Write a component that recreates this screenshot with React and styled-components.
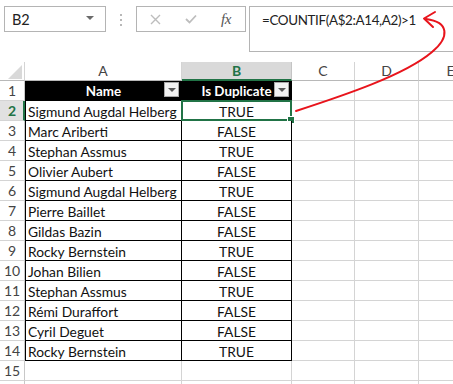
import React from "react";
import styled, { createGlobalStyle } from "styled-components";

const Global = createGlobalStyle`
  html, body { margin: 0; padding: 0; background: #fff; }
  body { font-family: Lato, "Open Sans", "Liberation Sans", sans-serif; font-size: 14px; color: #111; }
  * { box-sizing: border-box; }
`;

const Page = styled.div`
  position: relative;
  width: 453px;
  height: 384px;
  overflow: hidden;
  background: #fff;
`;

const FormulaBar = styled.div`
  display: flex;
  align-items: flex-start;
  height: 62px;
  padding: 6px 0 0 4px;
`;

const NameBox = styled.div`
  width: 102px;
  height: 26px;
  border: 1px solid #b4b4b4;
  display: flex;
  align-items: center;
  justify-content: space-between;
  padding: 0 11px 0 7px;
  font-size: 14.5px;
  color: #222;
`;

const Caret = styled.span`
  width: 0;
  height: 0;
  border-left: 4px solid transparent;
  border-right: 4px solid transparent;
  border-top: 4px solid #6a6a6a;
  margin-top: -2px;
`;

const Dots = styled.div`
  width: 30px;
  height: 26px;
  display: flex;
  flex-direction: column;
  align-items: center;
  justify-content: center;
  gap: 3px;
  padding-top: 1px;
`;

const Dot = styled.span`
  width: 2px;
  height: 2px;
  background: #b8b8b8;
`;

const ButtonBox = styled.div`
  width: 110px;
  height: 26px;
  border: 1px solid #b4b4b4;
  display: flex;
  align-items: center;
  padding-left: 13px;
`;

const IconSlot = styled.span`
  width: 35px;
  display: flex;
  align-items: center;
`;

const Fx = styled.span`
  font-family: "Liberation Serif", "DejaVu Serif", serif;
  font-style: italic;
  font-size: 15px;
  color: #555;
  letter-spacing: -0.5px;
  margin-left: 1px;
`;

const FormulaBox = styled.div`
  flex: 1;
  margin-left: 3px;
  height: 46px;
  border: 1px solid #b4b4b4;
  border-right: none;
  padding: 3px 0 0 12px;
  line-height: 20px;
  font-size: 13.4px;
  letter-spacing: -0.35px;
  color: #222;
`;

const Sheet = styled.div`
  display: grid;
  grid-template-columns: 25px 157px 110px 63px 64px 64px;
  grid-template-rows: 19px;
  grid-auto-rows: 20px;
  width: 483px;
`;

const Corner = styled.div`
  position: relative;
  border-right: 1px solid #d4d4d4;
  border-bottom: 1px solid #b8b8b8;
  &::after {
    content: "";
    position: absolute;
    left: 8px;
    top: 3px;
    width: 14px;
    height: 14px;
    background: #d9d9d9;
    clip-path: polygon(100% 0, 100% 100%, 0 100%);
  }
`;

const ColHeader = styled.div`
  background: ${(p) => (p.$active ? "#d9d9d9" : "#fff")};
  border-right: 1px solid ${(p) => (p.$active ? "#c4c4c4" : "#d4d4d4")};
  border-bottom: ${(p) => (p.$active ? "2px solid #217346" : "1px solid #b8b8b8")};
  color: ${(p) => (p.$active ? "#217346" : "#444")};
  font-weight: ${(p) => (p.$active ? 700 : 400)};
  text-align: center;
  font-size: 14px;
  line-height: 17px;
`;

const RowHeader = styled.div`
  background: ${(p) => (p.$active ? "#e1e1e1" : "#fff")};
  border-right: ${(p) => (p.$active ? "2px solid #217346" : "1px solid #c8c8c8")};
  border-bottom: 1px solid #d4d4d4;
  color: ${(p) => (p.$active ? "#217346" : "#444")};
  font-weight: ${(p) => (p.$active ? 700 : 400)};
  text-align: center;
  font-size: 14px;
  line-height: 20px;
  padding-left: ${(p) => (p.$active ? "1px" : "0")};
`;

const Cell = styled.div`
  border-right: 1px solid #d4d4d4;
  border-bottom: 1px solid #d4d4d4;
`;

const TableCell = styled.div`
  position: relative;
  border-right: 1px solid #000;
  border-bottom: 1px solid #000;
  border-left: ${(p) => (p.$first ? "1px solid #000" : "none")};
  background: ${(p) => (p.$head ? "#000" : "#fff")};
  color: ${(p) => (p.$head ? "#fff" : "#111")};
  font-weight: ${(p) => (p.$head ? 700 : 400)};
  text-align: ${(p) => (p.$align === "left" ? "left" : "center")};
  padding: 1px 2px 0 2px;
  line-height: 19px;
  font-size: ${(p) => (p.$head ? "13.4px" : "13.8px")};
  white-space: nowrap;
`;

const FilterButton = styled.span`
  position: absolute;
  right: 2px;
  top: 1px;
  width: 15px;
  height: 15px;
  background: #f2f2f2;
  border: 1px solid #a8a8a8;
  display: flex;
  align-items: center;
  justify-content: center;
  &::after {
    content: "";
    width: 0;
    height: 0;
    border-left: 4px solid transparent;
    border-right: 4px solid transparent;
    border-top: 4px solid #5a5a5a;
  }
`;

const Selection = styled.span`
  position: absolute;
  left: -1px;
  top: -1px;
  right: -1px;
  bottom: -1px;
  border: 2px solid #217346;
  pointer-events: none;
`;

const FillHandle = styled.span`
  position: absolute;
  right: -4px;
  bottom: -4px;
  width: 6px;
  height: 6px;
  background: #217346;
  outline: 1px solid #fff;
`;

const Overlay = styled.svg`
  position: absolute;
  left: 0;
  top: 0;
  pointer-events: none;
`;

const rows = [
  ["Sigmund Augdal Helberg", "TRUE"],
  ["Marc Ariberti", "FALSE"],
  ["Stephan Assmus", "TRUE"],
  ["Olivier Aubert", "FALSE"],
  ["Sigmund Augdal Helberg", "TRUE"],
  ["Pierre Baillet", "FALSE"],
  ["Gildas Bazin", "FALSE"],
  ["Rocky Bernstein", "TRUE"],
  ["Johan Bilien", "FALSE"],
  ["Stephan Assmus", "TRUE"],
  ["Rémi Duraffort", "FALSE"],
  ["Cyril Deguet", "FALSE"],
  ["Rocky Bernstein", "TRUE"],
];

const cols = ["A", "B", "C", "D", "E"];

export default function App() {
  return (
    <Page>
      <Global />
      <FormulaBar>
        <NameBox>
          <span>B2</span>
          <Caret />
        </NameBox>
        <Dots>
          <Dot />
          <Dot />
          <Dot />
        </Dots>
        <ButtonBox>
          <IconSlot>
            <svg width="11" height="11" viewBox="0 0 11 11">
              <path d="M1 1 L10 10 M10 1 L1 10" stroke="#bdbdbd" strokeWidth="1.4" fill="none" />
            </svg>
          </IconSlot>
          <IconSlot>
            <svg width="12" height="10" viewBox="0 0 12 10">
              <path d="M1 5 L4.5 8.5 L11 1.5" stroke="#bdbdbd" strokeWidth="1.8" fill="none" />
            </svg>
          </IconSlot>
          <Fx>fx</Fx>
        </ButtonBox>
        <FormulaBox>=COUNTIF(A$2:A14,A2)&gt;1</FormulaBox>
      </FormulaBar>
      <Sheet>
        <Corner />
        {cols.map((c) => (
          <ColHeader key={c} $active={c === "B"}>
            {c}
          </ColHeader>
        ))}
        <RowHeader>1</RowHeader>
        <TableCell $head $first>
          Name
          <FilterButton />
        </TableCell>
        <TableCell $head>
          Is Duplicate
          <FilterButton />
        </TableCell>
        <Cell />
        <Cell />
        <Cell />
        {rows.map(([name, dup], i) => (
          <React.Fragment key={i}>
            <RowHeader $active={i === 0}>{i + 2}</RowHeader>
            <TableCell $first $align="left">
              {name}
            </TableCell>
            <TableCell>
              {dup}
              {i === 0 && (
                <Selection>
                  <FillHandle />
                </Selection>
              )}
            </TableCell>
            <Cell />
            <Cell />
            <Cell />
          </React.Fragment>
        ))}
        <RowHeader>15</RowHeader>
        <Cell />
        <Cell />
        <Cell />
        <Cell />
        <Cell />
        <RowHeader />
        <Cell />
        <Cell />
        <Cell />
        <Cell />
        <Cell />
      </Sheet>
      <Overlay width="453" height="384" viewBox="0 0 453 384">
        <path
          d="M296 111 C 345 95, 405 75, 432 52 C 450 37, 449 22, 426 19"
          stroke="#e8141c"
          strokeWidth="2"
          fill="none"
          strokeLinecap="round"
        />
        <path
          d="M435 12 L424 18.5 L433 27"
          stroke="#e8141c"
          strokeWidth="2"
          fill="none"
          strokeLinecap="round"
          strokeLinejoin="round"
        />
      </Overlay>
    </Page>
  );
}
